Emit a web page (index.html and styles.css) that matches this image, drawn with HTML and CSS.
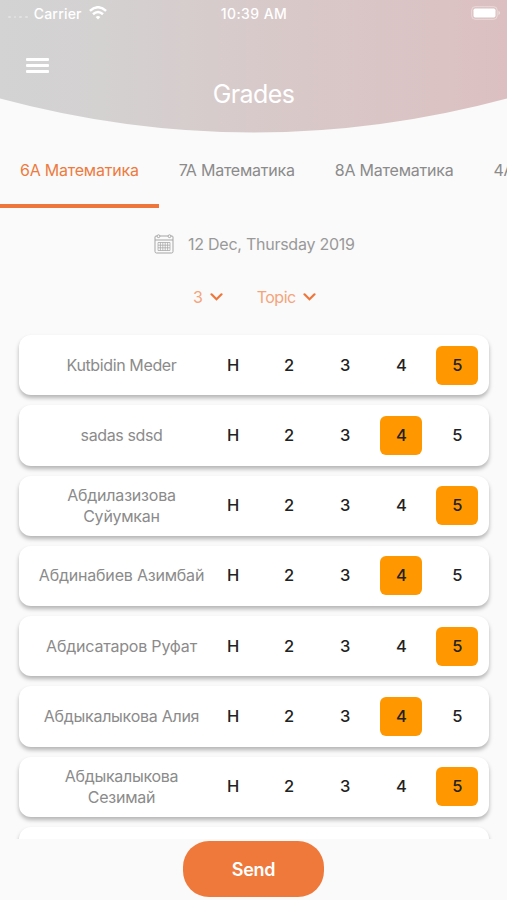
FILE: index.html
```
<!DOCTYPE html>
<html lang="en">
<head>
<meta charset="utf-8">
<title>Grades</title>
<link rel="stylesheet" href="styles.css">
</head>
<body>
<header class="header">
  <svg class="header-bg" viewBox="0 0 507 133" preserveAspectRatio="none" aria-hidden="true">
    <defs><linearGradient id="fade"><stop offset="0" stop-color="#d3d3d3"/><stop offset=".2" stop-color="#d4d1d1"/><stop offset=".5" stop-color="#d8caca"/><stop offset="1" stop-color="#dcc0c1"/></linearGradient></defs>
    <path d="M0 0H507V98.500Q253.500 166.500 0 98.500Z" fill="url(#fade)"/>
  </svg>
  <div class="status">
    <div class="carrier"><span class="signal"><i></i><i></i><i></i><i></i></span><span>Carrier</span>
      <svg width="18" height="14" viewBox="0 0 18 14"><g fill="none" stroke="#fff" stroke-width="2.500"><path d="M.9 4.900Q9-2.400 17.100 4.900"/><path d="M4 8.300Q9 3.800 14 8.300"/></g><path d="M9 13.500L6.600 11Q9 9 11.400 11Z" fill="#fff"/></svg>
    </div>
    <span class="time">10:39 AM</span>
    <svg class="battery" width="30" height="14" viewBox="0 0 30 14"><rect x=".7" y=".7" width="25.500" height="12.600" rx="3.500" fill="none" stroke="#fff" stroke-opacity=".4"/><rect x="2.500" y="2.500" width="22" height="9" rx="1.700" fill="#fff"/><path d="M27.500 4.800Q30.500 7 27.500 9.200Z" fill="#fff" fill-opacity=".5"/></svg>
  </div>
  <div class="menu"><i></i><i></i><i></i></div>
  <h1 class="title">Grades</h1>
</header>
<nav class="tabs">
  <span class="tab active">6А Математика</span><span class="tab">7А Математика</span><span class="tab">8А Математика</span><span class="tab">4А Математика</span>
</nav>
<div class="date">
  <svg width="20" height="20" viewBox="0 0 20 20" fill="none" stroke="#a5a5a5"><path d="M3 2H2Q1 2 1 3V17.500Q1 19 2.500 19H17.500Q19 19 19 17.500V3Q19 2 18 2H17M6 2H14M1 6H19" stroke-width="1"/><circle cx="4.500" cy="2.200" r="1.400"/><circle cx="15.500" cy="2.200" r="1.400"/><path d="M4 8.500H16V16.500H4ZM4 11.200H16M4 13.800H16M6.400 8.500V16.500M8.800 8.500V16.500M11.200 8.500V16.500M13.600 8.500V16.500" stroke-width=".75"/></svg>
  <span>12 Dec, Thursday 2019</span>
</div>
<div class="filters">
  <span class="filter">3<svg width="13" height="8" viewBox="0 0 13 8"><path d="M1.500 1.300L6.500 6.200L11.500 1.300"/></svg></span>
  <span class="filter topic">Topic<svg width="13" height="8" viewBox="0 0 13 8"><path d="M1.500 1.300L6.500 6.200L11.500 1.300"/></svg></span>
</div>
<main class="list">
  <div class="row"><div class="name latin">Kutbidin Meder</div><b>Н</b><b>2</b><b>3</b><b>4</b><b class="on">5</b></div>
  <div class="row"><div class="name latin">sadas sdsd</div><b>Н</b><b>2</b><b>3</b><b class="on">4</b><b>5</b></div>
  <div class="row"><div class="name">Абдилазизова<br>Суйумкан</div><b>Н</b><b>2</b><b>3</b><b>4</b><b class="on">5</b></div>
  <div class="row"><div class="name">Абдинабиев Азимбай</div><b>Н</b><b>2</b><b>3</b><b class="on">4</b><b>5</b></div>
  <div class="row"><div class="name">Абдисатаров Руфат</div><b>Н</b><b>2</b><b>3</b><b>4</b><b class="on">5</b></div>
  <div class="row"><div class="name tight">Абдыкалыкова Алия</div><b>Н</b><b>2</b><b>3</b><b class="on">4</b><b>5</b></div>
  <div class="row"><div class="name tight">Абдыкалыкова<br>Сезимай</div><b>Н</b><b>2</b><b>3</b><b>4</b><b class="on">5</b></div>
  <div class="row"></div>
</main>
<footer class="footer"><button class="send">Send</button></footer>
</body>
</html>
```
FILE: styles.css
```
* { box-sizing: border-box; }
body {
  margin: 0;
  width: 507px;
  height: 900px;
  overflow: hidden;
  background: #fafafa;
  font-family: Inter, "Liberation Sans", sans-serif;
  font-size: 16px;
  color: #8b8b8b;
  display: flex;
  flex-direction: column;
}
svg { display: block; flex: none; }
.header { position: relative; height: 133px; flex: none; color: #fff; }
.header-bg { position: absolute; inset: 0; width: 100%; height: 100%; }
.status {
  position: relative;
  height: 26px;
  display: grid;
  grid-template-columns: 1fr auto 1fr;
  align-items: center;
  padding: 0 6px 0 8px;
  font-size: 14px;
  font-weight: 500;
}
.carrier { display: flex; align-items: center; gap: 6px; letter-spacing: .2px; font-size: 14px; }
.carrier > span:nth-child(2) { margin-right: 1px; }
.time { letter-spacing: .4px; padding-right: 1px; }
.signal { display: flex; gap: 3px; padding-top: 8px; }
.signal i { width: 2.700px; height: 2.500px; border-radius: 50%; background: rgba(255,255,255,.35); }
.battery { justify-self: end; }
.menu { position: relative; padding: 32px 0 0 26px; display: grid; gap: 3px; width: 49px; }
.menu i { height: 3px; border-radius: 1px; background: #fff; }
.title {
  position: relative;
  margin: 6px 0 0;
  text-align: center;
  font-size: 25px;
  line-height: 30px;
  font-weight: 400;
  letter-spacing: -.6px;
}
.tabs { display: flex; flex: none; height: 75px; overflow: hidden; }
.tab {
  flex: none;
  padding: 0 20px;
  line-height: 75px;
  font-size: 16px;
  letter-spacing: -.22px;
  white-space: nowrap;
}
.tab.active { color: #ee7a3e; border-bottom: 4px solid #ee763a; }
.date { display: flex; flex: none; height: 71px; padding-left: 154px; gap: 14px; align-items: center; color: #999; letter-spacing: -.25px; }
.filters { display: flex; flex: none; height: 35px; padding-left: 193px; gap: 34px; align-items: center; color: #f4a47c; }
.filter { display: flex; align-items: center; gap: 7px; letter-spacing: -.2px; }
.topic { letter-spacing: -.5px; }
.filter path { fill: none; stroke: #ee763a; stroke-width: 2.200; stroke-linecap: round; }
.list {
  flex: none;
  height: 525px;
  padding: 21px 18.500px 0 19px;
  display: flex;
  flex-direction: column;
  gap: 10px;
  overflow: hidden;
}
.row {
  flex: none;
  height: 60.250px;
  display: grid;
  grid-template-columns: 159px repeat(5, 42px);
  column-gap: 14.100px;
  padding-left: 20px;
  align-items: center;
  border-radius: 12px;
  background: #fff;
  box-shadow: 0 3px 4px rgba(0,0,0,.28);
}
.name { width: 180px; margin-left: -7.500px; text-align: center; line-height: 21px; white-space: nowrap; letter-spacing: -.2px; }
.name.latin { letter-spacing: -.38px; }
.name.tight { letter-spacing: -.27px; }
.row b {
  height: 39px;
  line-height: 39px;
  text-align: center;
  color: #222;
  font-size: 16.500px;
  font-weight: 500;
  border-radius: 6px;
}
.row .on { background: #ff9800; }
.footer { flex: 1; display: flex; justify-content: center; padding-top: 2px; }
.send {
  width: 141px;
  height: 56px;
  padding: 0;
  border: 0;
  border-radius: 26px;
  background: #ef793b;
  color: #fff;
  font: 600 18px Inter, sans-serif;
  letter-spacing: -.3px;
}
```
